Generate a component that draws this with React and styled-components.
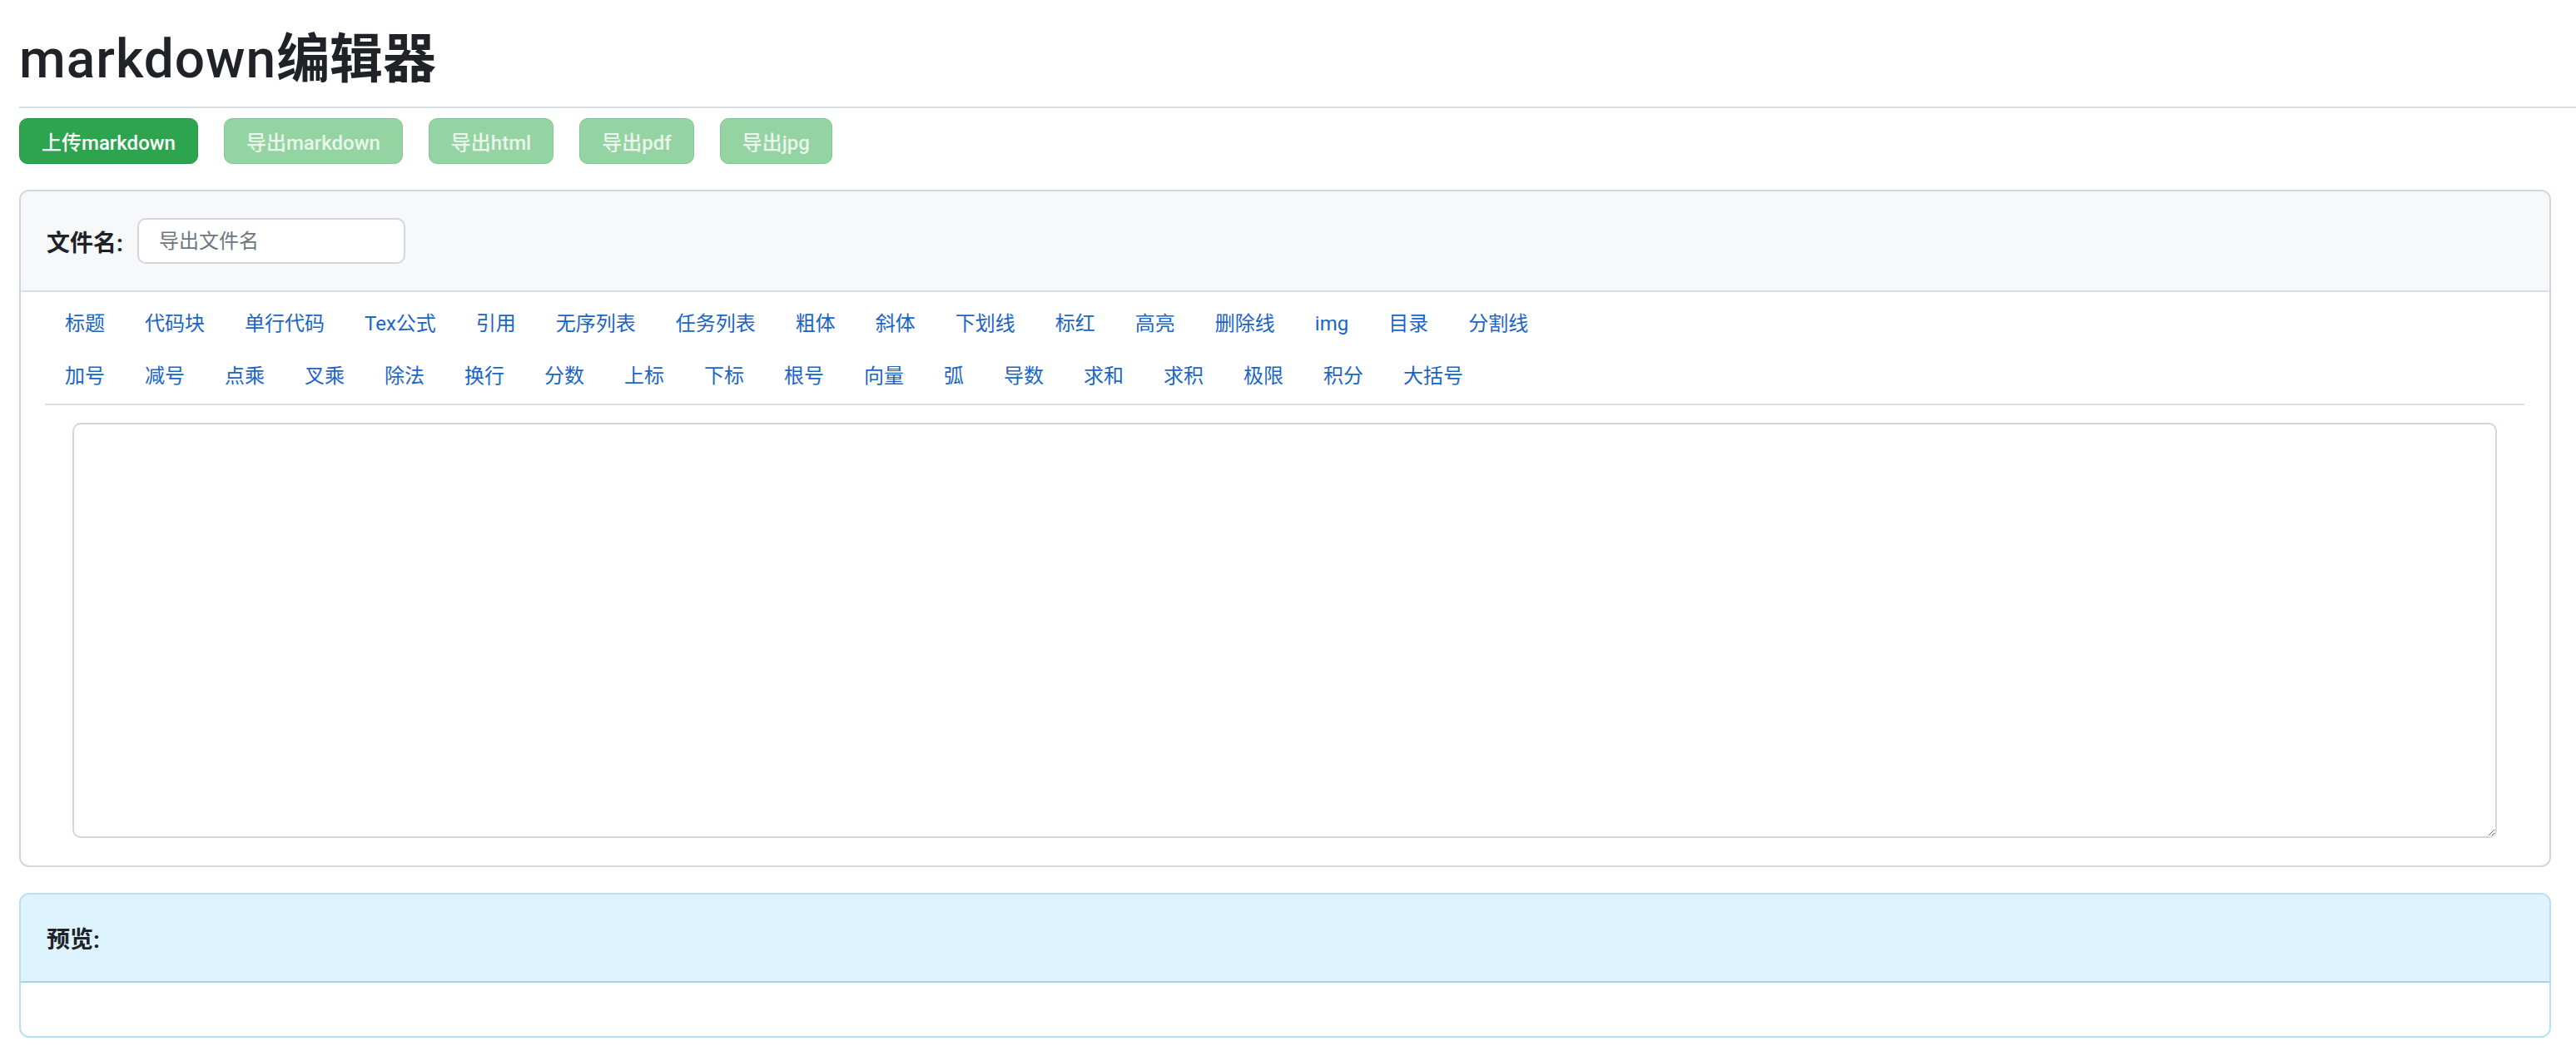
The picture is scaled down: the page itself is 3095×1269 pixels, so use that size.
import React from "react";
import styled, { createGlobalStyle } from "styled-components";

const Global = createGlobalStyle`
  html, body { margin: 0; padding: 0; background: #ffffff; }
  body {
    font-family: Roboto, "Noto Sans CJK SC", sans-serif;
    color: #1f2328;
  }
  * { box-sizing: border-box; }
`;

const Page = styled.div`
  padding-bottom: 20px;
`;

const Header = styled.header`
  margin-left: 23px;
  padding-top: 33px;
  padding-bottom: 18px;
  border-bottom: 2px solid #d8dee4;
`;

const Title = styled.h1`
  margin: 0;
  font-size: 64px;
  line-height: 77px;
  font-weight: 500;
  color: #1f2328;
  letter-spacing: 1px;
`;

const TitleCjk = styled.span`
  font-weight: 700;
  letter-spacing: 0;
`;

const ActionBar = styled.div`
  display: flex;
  gap: 31px;
  margin: 12px 0 0 23px;
`;

const ActionButton = styled.button`
  height: 55px;
  padding: 0 26px;
  border-radius: 10px;
  border: 1.5px solid ${(p) => (p.$disabled ? "#86c596" : "#27933f")};
  background: ${(p) => (p.$disabled ? "#94d3a2" : "#2da44e")};
  color: ${(p) => (p.$disabled ? "#eaf6ec" : "#ffffff")};
  font-family: inherit;
  font-size: 24px;
  font-weight: 500;
  cursor: ${(p) => (p.$disabled ? "default" : "pointer")};
`;

const Card = styled.section`
  margin: ${(p) => p.$top}px 30px 0 23px;
  border: 2px solid ${(p) => (p.$tone === "info" ? "#b9def3" : "#d0d7de")};
  border-radius: 12px;
  overflow: hidden;
  background: #ffffff;
`;

const CardHeader = styled.div`
  display: flex;
  align-items: center;
  gap: 17px;
  min-height: ${(p) => p.$height}px;
  padding: 0 31px;
  background: ${(p) => (p.$tone === "info" ? "#ddf4ff" : "#f6f8fa")};
  border-bottom: 2px solid ${(p) => (p.$tone === "info" ? "#a5d3ee" : "#d8dee4")};
`;

const Label = styled.label`
  font-size: 28px;
  font-weight: 700;
  color: #1f2328;
`;

const FileInput = styled.input`
  width: 322px;
  height: 55px;
  padding: 0 24px;
  border: 2px solid #d0d7de;
  border-radius: 10px;
  background: #ffffff;
  font-family: inherit;
  font-size: 24px;
  color: #1f2328;
  outline: none;
  &::placeholder { color: #6e7781; }
`;

const CardBody = styled.div`
  padding: ${(p) => p.$pad};
  min-height: ${(p) => p.$min || 0}px;
`;

const Toolbar = styled.div`
  border-bottom: 2px solid #d8dee4;
  padding-bottom: 1px;
`;

const ToolRow = styled.div`
  display: flex;
`;

const ToolLink = styled.a`
  display: block;
  padding: 0 24px;
  line-height: 63px;
  font-size: 24px;
  color: #1b65c6;
  text-decoration: none;
  cursor: pointer;
  white-space: nowrap;
`;

const EditorWrap = styled.div`
  margin: 21px 33px 0;
`;

const Editor = styled.textarea`
  display: block;
  width: 100%;
  height: 499px;
  border: 2px solid #d0d7de;
  border-radius: 10px;
  padding: 12px 16px;
  font-family: inherit;
  font-size: 24px;
  resize: vertical;
  outline: none;
`;

const row1 = ["标题", "代码块", "单行代码", "Tex公式", "引用", "无序列表", "任务列表", "粗体", "斜体", "下划线", "标红", "高亮", "删除线", "img", "目录", "分割线"];
const row2 = ["加号", "减号", "点乘", "叉乘", "除法", "换行", "分数", "上标", "下标", "根号", "向量", "弧", "导数", "求和", "求积", "极限", "积分", "大括号"];

export default function App() {
  return (
    <Page>
      <Global />
      <Header>
        <Title>
          markdown<TitleCjk>编辑器</TitleCjk>
        </Title>
      </Header>
      <ActionBar>
        <ActionButton>上传markdown</ActionButton>
        <ActionButton $disabled>导出markdown</ActionButton>
        <ActionButton $disabled>导出html</ActionButton>
        <ActionButton $disabled>导出pdf</ActionButton>
        <ActionButton $disabled>导出jpg</ActionButton>
      </ActionBar>

      <Card $top={31}>
        <CardHeader $height={121}>
          <Label>文件名:</Label>
          <FileInput placeholder="导出文件名" />
        </CardHeader>
        <CardBody $pad="7px 30px 33px 29px">
          <Toolbar>
            <ToolRow>
              {row1.map((t) => (
                <ToolLink key={t}>{t}</ToolLink>
              ))}
            </ToolRow>
            <ToolRow>
              {row2.map((t) => (
                <ToolLink key={t}>{t}</ToolLink>
              ))}
            </ToolRow>
          </Toolbar>
          <EditorWrap>
            <Editor />
          </EditorWrap>
        </CardBody>
      </Card>

      <Card $top={31} $tone="info">
        <CardHeader $height={106} $tone="info">
          <Label>预览:</Label>
        </CardHeader>
        <CardBody $pad="0" $min={64} />
      </Card>
    </Page>
  );
}
